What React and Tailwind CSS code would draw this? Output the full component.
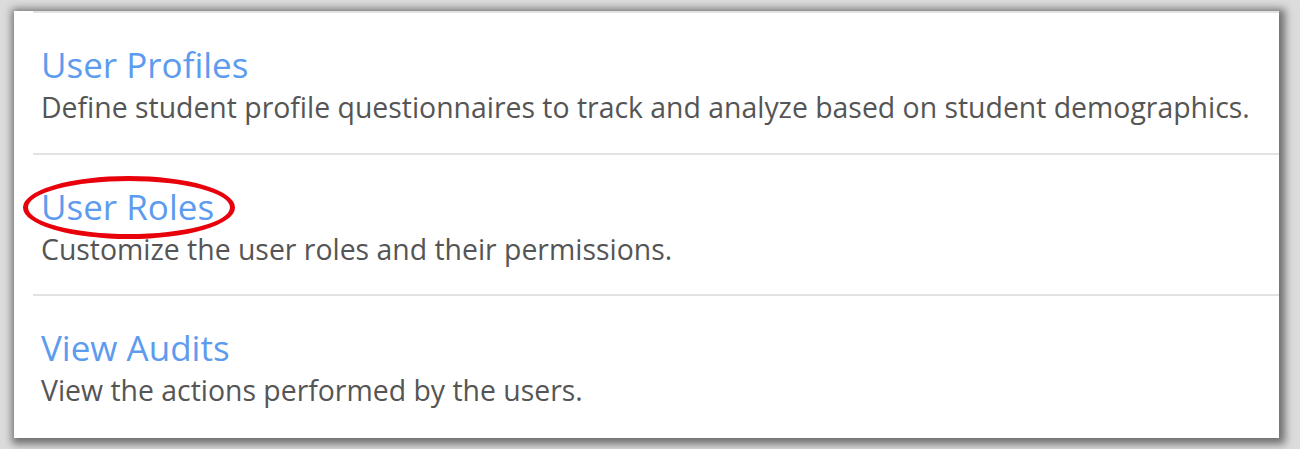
export default function App() {
  const items = [
    { t: "User Profiles", d: "Define student profile questionnaires to track and analyze based on student demographics." },
    { t: "User Roles", d: "Customize the user roles and their permissions.", circle: true },
    { t: "View Audits", d: "View the actions performed by the users." },
  ];
  return (
    <div className="w-[1300px] h-[449px] bg-[#dcdcdc] pt-[11px] pl-[14px] pr-[21px] pb-[11px] overflow-hidden" style={{ fontFamily: '"Open Sans", sans-serif' }}>
      <div className="h-full bg-white shadow-[2px_2px_8px_4px_rgba(0,0,0,0.5)] pl-[19px]">
        <div className="border-t-2 border-[#e2e2e2] h-full flex flex-col">
          {items.map((it, i) => (
            <div key={i} className={`h-[143px] flex flex-col pl-[8px] pt-[29px] ${i < 2 ? "border-b-2 border-[#e2e2e2]" : ""}`}>
              <div className="relative self-start">
                <span className="text-[35px] leading-[46px] text-[#5d9bef]">{it.t}</span>
                {it.circle && (
                  <div className="absolute left-[-18px] top-[-8px] w-[212px] h-[63px] rounded-[50%] border-[5px] border-[#e8000b]"></div>
                )}
              </div>
              <div className="mt-[2px] text-[28.4px] leading-[34px] text-[#555555]">{it.d}</div>
            </div>
          ))}
        </div>
      </div>
    </div>
  );
}
